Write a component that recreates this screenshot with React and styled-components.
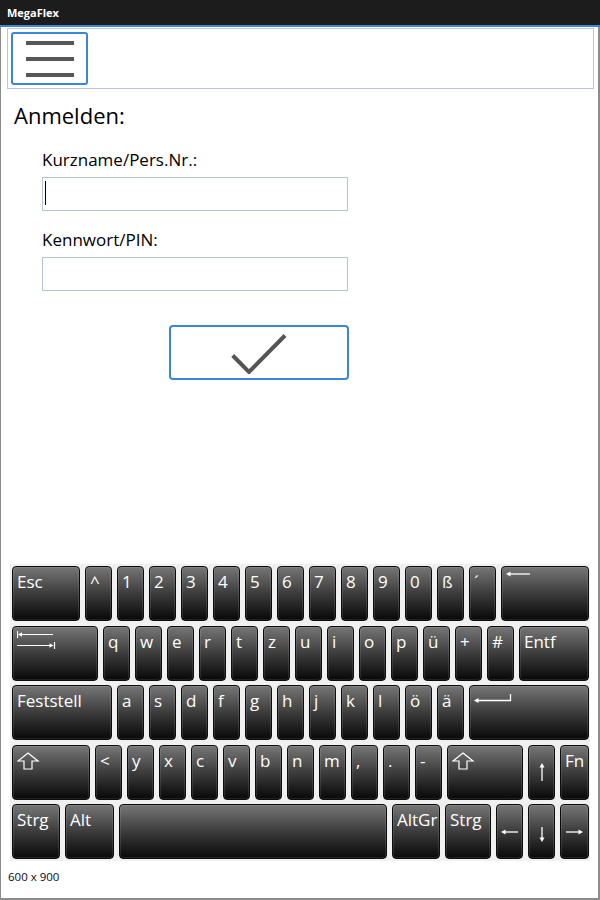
import React from 'react'
import styled, { createGlobalStyle } from 'styled-components'

const GlobalStyle = createGlobalStyle`
    html, body {
        margin: 0;
        padding: 0;
        background: #fff;
    }
    * {
        box-sizing: border-box;
    }
`

const ArrowHead = ({ dir }) => {
    // small filled arrow tips
    const pts = {
        left: '0,4 4.5,1.5 4.5,6.5',
        right: '17,4 12.5,1.5 12.5,6.5',
    }
    return <polygon points={pts[dir]} fill="#fff" />
}

const BackspaceIcon = () => (
    <svg width="28" height="8" viewBox="0 0 28 8">
        <line x1="3" y1="4" x2="24" y2="4" stroke="#fff" strokeWidth="1.3" />
        <polygon points="0,4 4.5,1.5 4.5,6.5" fill="#fff" />
    </svg>
)

const TabIcon = () => (
    <svg width="40" height="20" viewBox="0 0 40 20">
        <line x1="0.5" y1="1" x2="0.5" y2="8" stroke="#fff" strokeWidth="1.2" />
        <line x1="2" y1="4.5" x2="36" y2="4.5" stroke="#fff" strokeWidth="1.2" />
        <polygon points="1,4.5 5,2.2 5,6.8" fill="#fff" />
        <line x1="0" y1="15.5" x2="36" y2="15.5" stroke="#fff" strokeWidth="1.2" />
        <polygon points="36.5,15.5 32.5,13.2 32.5,17.8" fill="#fff" />
        <line x1="37.5" y1="12" x2="37.5" y2="19" stroke="#fff" strokeWidth="1.2" />
    </svg>
)

const EnterIcon = () => (
    <svg width="40" height="12" viewBox="0 0 40 12">
        <polyline points="2,8.5 36.5,8.5 36.5,2" fill="none" stroke="#fff" strokeWidth="1.3" />
        <polygon points="0,8.5 4.5,6 4.5,11" fill="#fff" />
    </svg>
)

const ShiftIcon = () => (
    <svg width="23" height="18" viewBox="0 0 23 18">
        <polygon
            points="11,1 21,9 15,9 15,17 7,17 7,9 1,9"
            fill="none"
            stroke="#fff"
            strokeWidth="1.2"
            strokeLinejoin="miter"
        />
    </svg>
)

const UpIcon = () => (
    <svg width="8" height="18" viewBox="0 0 8 18">
        <line x1="4" y1="3" x2="4" y2="18" stroke="#fff" strokeWidth="1.3" />
        <polygon points="4,0 1.5,4.5 6.5,4.5" fill="#fff" />
    </svg>
)

const DownIcon = () => (
    <svg width="8" height="15" viewBox="0 0 8 15">
        <line x1="4" y1="0" x2="4" y2="12" stroke="#fff" strokeWidth="1.3" />
        <polygon points="4,15 1.5,10.5 6.5,10.5" fill="#fff" />
    </svg>
)

const SideIcon = ({ dir }) => (
    <svg width="17" height="8" viewBox="0 0 17 8">
        <line x1={dir === 'left' ? 3 : 0} y1="4" x2={dir === 'left' ? 17 : 14} y2="4" stroke="#fff" strokeWidth="1.3" />
        <ArrowHead dir={dir} />
    </svg>
)

const rows = [
    [
        { label: 'Esc', w: 68 },
        ...'^1234567890ß´'.split('').map((c) => ({ label: c, w: 27 })),
        { icon: <BackspaceIcon />, w: 88, pad: 3 },
    ],
    [
        { icon: <TabIcon />, w: 86, pad: 3 },
        ...'qwertzuiopü+#'.split('').map((c) => ({ label: c, w: 27 })),
        { label: 'Entf', w: 70 },
    ],
    [
        { label: 'Feststell', w: 100 },
        ...'asdfghjklöä'.split('').map((c) => ({ label: c, w: 27 })),
        { icon: <EnterIcon />, w: 120, pad: 6 },
    ],
    [
        { icon: <ShiftIcon />, w: 78, pad: 6 },
        ...'<yxcvbnm,.-'.split('').map((c) => ({ label: c, w: 27 })),
        { icon: <ShiftIcon />, w: 76, pad: 6 },
        { icon: <UpIcon />, w: 27, arrow: 17 },
        { label: 'Fn', w: 29 },
    ],
    [
        { label: 'Strg', w: 48 },
        { label: 'Alt', w: 49 },
        { label: '', w: 268 },
        { label: 'AltGr', w: 48 },
        { label: 'Strg', w: 46 },
        { icon: <SideIcon dir="left" />, w: 27, arrow: 23 },
        { icon: <DownIcon />, w: 27, arrow: 22 },
        { icon: <SideIcon dir="right" />, w: 29, arrow: 23 },
    ],
]

const App = () => {
    return (
        <Frame>
            <GlobalStyle />
            <TitleBar>MegaFlex</TitleBar>
            <Body>
                <Toolbar>
                    <MenuButton>
                        <Bar />
                        <Bar />
                        <Bar />
                    </MenuButton>
                </Toolbar>
                <Content>
                    <Heading>Anmelden:</Heading>
                    <Form>
                        <FieldLabel>Kurzname/Pers.Nr.:</FieldLabel>
                        <Input>
                            <Caret />
                        </Input>
                        <FieldLabel $gap={19}>Kennwort/PIN:</FieldLabel>
                        <Input />
                        <OkButton>
                            <svg width="56" height="42" viewBox="0 0 56 42">
                                <polyline
                                    points="1.7,23.5 18,40 54,3.5"
                                    fill="none"
                                    stroke="#555"
                                    strokeWidth="4"
                                />
                            </svg>
                        </OkButton>
                    </Form>
                </Content>
                <Keyboard>
                    {rows.map((row, i) => (
                        <KeyRow key={i}>
                            {row.map((k, j) =>
                                k.arrow ? (
                                    <ArrowKey key={j} $w={k.w} $top={k.arrow}>
                                        {k.icon}
                                    </ArrowKey>
                                ) : (
                                    <Key key={j} $w={k.w} $top={k.pad}>
                                        {k.icon || k.label}
                                    </Key>
                                )
                            )}
                        </KeyRow>
                    ))}
                </Keyboard>
                <Footer>600 x 900</Footer>
            </Body>
        </Frame>
    )
}

const Frame = styled.div`
    width: 600px;
    height: 900px;
    display: flex;
    flex-direction: column;
    font-family: "Open Sans", "Noto Sans", sans-serif;
    color: #000;
`

const TitleBar = styled.div`
    height: 27px;
    padding: 1px 0 0 7px;
    background: #1c1c1c;
    border-bottom: 2px solid #3d84d6;
    color: #fff;
    font-size: 11px;
    font-weight: 700;
    line-height: 23px;
`

const Body = styled.div`
    flex: 1;
    display: flex;
    flex-direction: column;
    border-left: 1px solid #8c8c8c;
    border-right: 2px solid #8c8c8c;
    border-bottom: 2px solid #8c8c8c;
    background: #fff;
`

const Toolbar = styled.div`
    height: 61px;
    margin: 1px 4px 0 6px;
    padding: 3px;
    border: 1px solid #b7c7d7;
`

const MenuButton = styled.div`
    width: 77px;
    height: 53px;
    border: 2px solid #3c86d8;
    border-radius: 3px;
    display: flex;
    flex-direction: column;
    align-items: center;
    justify-content: center;
    gap: 12px;
`

const Bar = styled.div`
    width: 48px;
    height: 4px;
    background: #575757;
`

const Content = styled.div`
    flex: 1;
    display: flex;
    flex-direction: column;
`

const Heading = styled.div`
    margin: 12px 0 0 13px;
    font-size: 22px;
    line-height: 28px;
`

const Form = styled.div`
    padding-left: 41px;
    display: flex;
    flex-direction: column;
    align-items: flex-start;
`

const FieldLabel = styled.div`
    margin-top: ${(p) => p.$gap || 21}px;
    font-size: 17px;
    line-height: 20px;
`

const Input = styled.div`
    width: 306px;
    height: 34px;
    margin-top: 7px;
    border: 1px solid #b6c3d0;
    padding: 3px 0 0 2px;
`

const Caret = styled.div`
    width: 1px;
    height: 24px;
    background: #000;
`

const OkButton = styled.div`
    width: 180px;
    height: 55px;
    margin: 34px 0 0 127px;
    border: 2px solid #3c86d8;
    border-radius: 4px;
    display: flex;
    align-items: center;
    justify-content: center;
`

const Keyboard = styled.div`
    width: 580px;
    margin-left: 9px;
    padding: 2px 1px 2px 2px;
    background: #f0f0f0;
    display: flex;
    flex-direction: column;
    gap: 4.5px;
`

const KeyRow = styled.div`
    display: flex;
    gap: 5px;
`

const Key = styled.div`
    width: ${(p) => p.$w}px;
    height: 55px;
    flex: none;
    display: flex;
    align-items: flex-start;
    padding: ${(p) => p.$top ?? 4}px 0 0 4px;
    border: 1px solid #0c0c0c;
    border-radius: 4px;
    background: linear-gradient(180deg, #767676 0%, #3c3c3c 50%, #080808 100%);
    box-shadow: inset 0 0 0 1px rgba(255, 255, 255, 0.1);
    color: #fff;
    font-size: 17px;
    line-height: 22px;
    white-space: nowrap;
`

const ArrowKey = styled(Key)`
    justify-content: center;
    padding: ${(p) => p.$top}px 0 0 0;
`

const Footer = styled.div`
    height: 37px;
    padding: 8px 0 0 7px;
    font-size: 11.5px;
    line-height: 16px;
    color: #0a0a1a;
`

export default App
